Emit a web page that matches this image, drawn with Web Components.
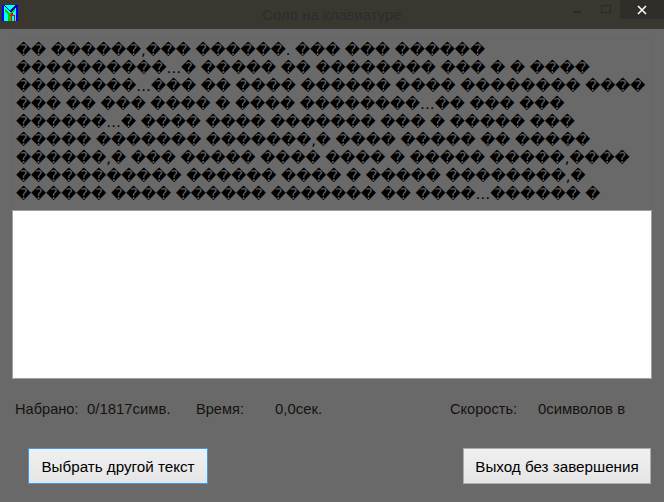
<!DOCTYPE html>
<html>
<head>
<meta charset="utf-8">
<title>Соло на клавиатуре</title>
<style>
  html, body { margin: 0; padding: 0; background: #696969; }
</style>
</head>
<body>
<solo-window>
  <win-titlebar slot="bar" caption="Соло на клавиатуре"></win-titlebar>
  <lesson-text slot="text"></lesson-text>
  <typing-box slot="input"></typing-box>
  <stat-row slot="stats">
    <stat-item style="--w:72px">Набрано:</stat-item>
    <stat-item value style="--w:109px">0/1817симв.</stat-item>
    <stat-item style="--w:79px">Время:</stat-item>
    <stat-item value style="--w:175px">0,0сек.</stat-item>
    <stat-item style="--w:88px">Скорость:</stat-item>
    <stat-item value style="--w:100px">0символов в</stat-item>
  </stat-row>
  <win-button slot="left" focused style="--w:180px">Выбрать другой текст</win-button>
  <win-button slot="right" style="--w:188px">Выход без завершения</win-button>
</solo-window>

<script>
/********************* Window *********************/
class SoloWindow extends HTMLElement {
  connectedCallback() {
    this.attachShadow({ mode: "open" }).innerHTML = `
    <style>
      :host {
        display: flex;
        flex-direction: column;
        width: 664px;
        height: 502px;
        overflow: hidden;
        background: #696969;
        font-family: "Liberation Sans", Arial, sans-serif;
      }
      .body { display: flex; flex-direction: column; padding: 9px 12px 0 12px; }
      .stats { margin-top: 21px; padding-left: 3px; }
      .buttons { display: flex; justify-content: space-between; margin-top: 30px; padding: 0 1px 0 16px; }
    </style>
    <slot name="bar"></slot>
    <div class="body">
      <slot name="text"></slot>
      <slot name="input"></slot>
      <div class="stats"><slot name="stats"></slot></div>
      <div class="buttons">
        <slot name="left"></slot>
        <slot name="right"></slot>
      </div>
    </div>`;
  }
}

/********************* Title bar *********************/
class WinTitlebar extends HTMLElement {
  connectedCallback() {
    this.attachShadow({ mode: "open" }).innerHTML = `
    <style>
      :host {
        display: flex;
        position: relative;
        align-items: flex-start;
        justify-content: center;
        height: 29px;
        background: #3a3731;
      }
      .icon { position: absolute; left: 2px; top: 5px; }
      .caption {
        margin-top: 5px;
        font: 14.9px/20px "Liberation Sans", Arial, sans-serif;
        color: #2f2d29;
      }
      .controls { position: absolute; right: 0; top: 0; display: flex; }
      .ctl { display: flex; align-items: center; justify-content: center; width: 29px; height: 19px; }
      .close { width: 44px; background: #312e29; }
    </style>
    <svg class="icon" width="16" height="16" viewBox="0 0 16 16" shape-rendering="crispEdges">
      <rect width="16" height="16" fill="#0000ff"/>
      <rect x="2" y="0" width="12" height="16" fill="#00ffff"/>
      <path d="M1 0h2v1h1v1h1v1h1v1h1v1h2v-1h1v-1h1v-1h1v-1h1v-1h2v2h-1v1h-1v1h-1v1h-1v1h-1v1h-2v-1h-1v-1h-1v-1h-1v-1h-1v-1h-1z" fill="#0000a8"/>
      <path d="M3 4h1v1h1v1h1v1h1v1h2v-1h1v-1h1v-1h1v-1h1v2h-1v1h-1v1h-1v1h-1v7h-3v-7h-1v-1h-1v-1h-1z" fill="#00d000"/>
      <path d="M8 10h1v-2h2v2h2v6h-1v-5h-2v5h-1v-5h-1z" fill="#ff0000"/>
    </svg>
    <span class="caption">${this.getAttribute("caption")}</span>
    <div class="controls">
      <div class="ctl">
        <svg width="8" height="2" style="margin-top:4px"><rect width="8" height="2" fill="#2c2a26"/></svg>
      </div>
      <div class="ctl">
        <svg width="10" height="8" style="margin-bottom:1px"><rect x=".5" y=".5" width="9" height="7" fill="none" stroke="#2c2a26"/></svg>
      </div>
      <div class="ctl close">
        <svg width="10" height="10" viewBox="0 0 10 10"><path d="M1 1l8 8M9 1l-8 8" stroke="#fff" stroke-width="1.6" fill="none"/></svg>
      </div>
    </div>`;
  }
}

/********************* Lesson text: the broken-encoding paragraph *********************/
const LESSON_LINES = [
  [2, " ", 6, ",", 3, " ", 6, ". ", 3, " ", 3, " ", 6],
  [10, "…", 1, " ", 5, " ", 2, " ", 8, " ", 3, " ", 1, " ", 1, " ", 4],
  [8, "…", 3, " ", 2, " ", 4, " ", 6, " ", 4, " ", 8, " ", 4],
  [3, " ", 2, " ", 3, " ", 4, " ", 1, " ", 4, " ", 8, "…", 2, " ", 3, " ", 3],
  [6, "…", 1, " ", 4, " ", 4, " ", 7, " ", 3, " ", 1, " ", 5, " ", 3],
  [5, " ", 7, " ", 7, ",", 1, " ", 4, " ", 5, " ", 2, " ", 5],
  [6, ",", 1, " ", 3, " ", 5, " ", 4, " ", 4, " ", 1, " ", 5, " ", 5, ",", 4],
  [11, " ", 6, " ", 4, " ", 1, " ", 5, " ", 8, ",", 1],
  [6, " ", 4, " ", 6, " ", 7, " ", 2, " ", 4, "…", 6, " ", 1]
];

class LessonText extends HTMLElement {
  connectedCallback() {
    const lines = LESSON_LINES.map((parts) => {
      const text = parts.map((p) => typeof p === "number" ? "\uFFFD".repeat(p) : p).join("");
      return `<div class="line">${text}</div>`;
    }).join("");
    this.attachShadow({ mode: "open" }).innerHTML = `
    <style>
      :host {
        display: block;
        box-sizing: border-box;
        height: 172px;
        padding: 2px 0 0 3px;
        border: 1px solid #646464;
        border-bottom: 0;
        overflow: hidden;
      }
      .line {
        height: 18px;
        white-space: pre;
        font: 14.68px/18px "DejaVu Sans", sans-serif;
        color: #000;
      }
    </style>
    ${lines}`;
  }
}

/********************* Typing box *********************/
class TypingBox extends HTMLElement {
  connectedCallback() {
    this.attachShadow({ mode: "open" }).innerHTML = `
    <style>
      :host {
        display: block;
        box-sizing: border-box;
        height: 169px;
        background: #fff;
        border: 1px solid #a0a0a0;
      }
    </style>`;
  }
}

/********************* Status row *********************/
class StatRow extends HTMLElement {
  connectedCallback() {
    this.attachShadow({ mode: "open" }).innerHTML = `
    <style>
      :host { display: flex; align-items: center; height: 18px; }
    </style>
    <slot></slot>`;
  }
}

class StatItem extends HTMLElement {
  connectedCallback() {
    const size = this.hasAttribute("value") ? "14.9px" : "14.6px";
    this.attachShadow({ mode: "open" }).innerHTML = `
    <style>
      :host {
        display: block;
        flex: none;
        width: var(--w);
        white-space: nowrap;
        font: ${size}/18px "Liberation Sans", Arial, sans-serif;
        color: #18120e;
      }
    </style>
    <slot></slot>`;
  }
}

/********************* Button *********************/
class WinButton extends HTMLElement {
  connectedCallback() {
    const border = this.hasAttribute("focused") ? "#3c9bf0" : "#acacac";
    this.attachShadow({ mode: "open" }).innerHTML = `
    <style>
      :host {
        display: flex;
        align-items: center;
        justify-content: center;
        box-sizing: border-box;
        width: var(--w);
        height: 36px;
        border: 1px solid ${border};
        background: linear-gradient(#f0f0f0, #e5e5e5);
        font: 15.2px "Liberation Sans", Arial, sans-serif;
        color: #000;
      }
    </style>
    <slot></slot>`;
  }
}

customElements.define("solo-window", SoloWindow);
customElements.define("win-titlebar", WinTitlebar);
customElements.define("lesson-text", LessonText);
customElements.define("typing-box", TypingBox);
customElements.define("stat-row", StatRow);
customElements.define("stat-item", StatItem);
customElements.define("win-button", WinButton);
</script>
</body>
</html>
